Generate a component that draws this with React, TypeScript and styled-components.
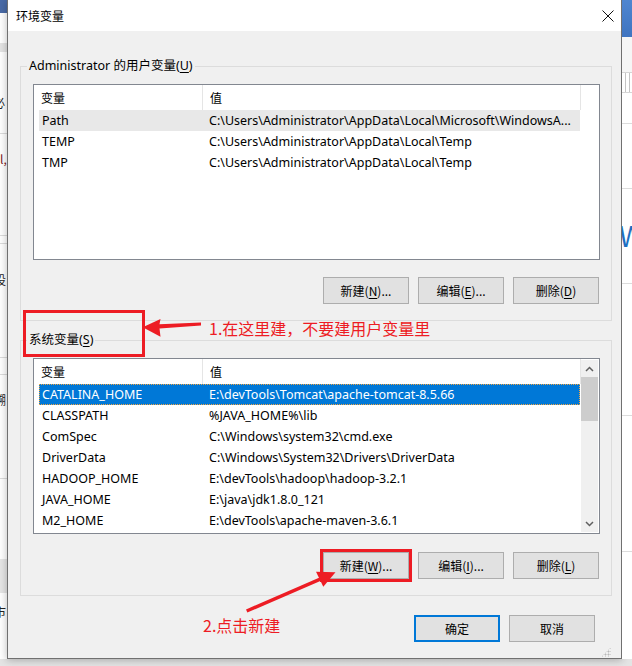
import React from "react";
import styled, { createGlobalStyle, css } from "styled-components";

const UI_FONT = `"Noto Sans", "Noto Sans CJK SC", sans-serif`;
const CJK_FONT = `"Noto Sans CJK SC", "Noto Sans", sans-serif`;
const RED = "#ed1c24";

const GlobalStyle = createGlobalStyle`
  html, body { margin: 0; padding: 0; }
  body {
    width: 632px;
    height: 666px;
    overflow: hidden;
    background: #e8e8e8;
    font-family: ${UI_FONT};
    font-size: 12px;
    color: #000;
  }
  u { text-decoration-thickness: 1px; text-underline-offset: 2px; }
`;

const Screen = styled.div`
  position: relative;
  width: 632px;
  height: 666px;
  overflow: hidden;
  display: flex;
  align-items: flex-start;
  background: linear-gradient(#f0f0f0, #e4e4e4);
`;

/* ---------- background application (visible at the edges) ---------- */
const SideStrip = styled.div<{ $w: number }>`
  flex: none;
  width: ${(p) => p.$w}px;
  height: 659px;
  display: flex;
  flex-direction: column;
  background: #ffffff;
  overflow: hidden;
`;

const Band = styled.div<{ $h?: number; $bg?: string; $line?: boolean; $grow?: boolean }>`
  flex: ${(p) => (p.$grow ? "1" : "none")};
  height: ${(p) => (p.$h ? `${p.$h}px` : "auto")};
  box-sizing: border-box;
  background: ${(p) => p.$bg ?? "transparent"};
  ${(p) =>
    p.$line &&
    css`
      border-bottom: 1px solid #dcdcdc;
    `}
`;

const ToolBand = styled.div`
  flex: none;
  height: 21px;
  box-sizing: border-box;
  border-top: 1px solid #d6d6d6;
  border-bottom: 1px solid #d6d6d6;
  display: flex;
  gap: 3px;
  padding-left: 3px;
  & > span {
    width: 1px;
    background: #c4c4c4;
  }
`;

const Shard = styled.div<{ $shift: number; $color?: string; $size?: number }>`
  flex: none;
  height: ${(p) => (p.$size ? p.$size + 4 : 16)}px;
  line-height: ${(p) => (p.$size ? p.$size + 4 : 16)}px;
  font-family: ${CJK_FONT};
  font-size: ${(p) => p.$size ?? 12}px;
  color: ${(p) => p.$color ?? "#222"};
  margin-left: ${(p) => p.$shift}px;
  white-space: nowrap;
`;

/* ---------- dialog ---------- */
const Dialog = styled.section`
  flex: none;
  width: 615px;
  height: 659px;
  box-sizing: border-box;
  border: 1px solid #707070;
  border-top: none;
  background: #f0f0f0;
  display: flex;
  flex-direction: column;
  box-shadow: 0 1px 8px rgba(0, 0, 0, 0.28);
`;

const TitleBar = styled.header`
  flex: none;
  height: 31px;
  background: #ffffff;
  display: flex;
  align-items: center;
  justify-content: space-between;
  padding: 0 7px 0 8px;
`;

const Title = styled.span`
  font-family: ${CJK_FONT};
  font-size: 12px;
  line-height: 16px;
`;

const Body = styled.div`
  flex: 1;
  display: flex;
  flex-direction: column;
  padding: 27px 9px 0 12px;
`;

const Group = styled.fieldset<{ $gap?: number }>`
  margin: ${(p) => p.$gap ?? 0}px 0 0 0;
  padding: 10px 11px 16px 12px;
  border: 1px solid #dcdcdc;
  min-width: 0;
`;

const GroupLegend = styled.legend`
  margin-left: -6px;
  padding: 0 2px;
  font-size: 12.5px;
  line-height: 16px;
  white-space: nowrap;
`;

const ListBox = styled.div`
  height: 176px;
  box-sizing: border-box;
  border: 1px solid #828790;
  background: #ffffff;
  display: flex;
`;

const ListMain = styled.div`
  flex: 1;
  min-width: 0;
  display: flex;
  flex-direction: column;
  overflow: hidden;
`;

const HeaderRow = styled.div`
  flex: none;
  height: 25px;
  display: flex;
`;

const HeaderCell = styled.div<{ $w: number }>`
  flex: none;
  width: ${(p) => p.$w}px;
  box-sizing: border-box;
  border-right: 1px solid #e5e5e5;
  padding-left: 7px;
  line-height: 25px;
  font-family: ${CJK_FONT};
  font-size: 12px;
`;

const ItemRow = styled.div<{ $state?: "selected" | "hover" }>`
  flex: none;
  display: flex;
  height: 21px;
  width: 541px;
  margin-left: 5px;
  box-sizing: border-box;
  line-height: 21px;
  font-size: 12.5px;
  color: #000;
  ${(p) =>
    p.$state === "hover" &&
    css`
      background: #e8e8e8;
    `}
  ${(p) =>
    p.$state === "selected" &&
    css`
      background: #0078d7;
      color: #ffffff;
      outline: 1px dotted #f2a541;
      outline-offset: -1px;
    `}
`;

const ItemCell = styled.div<{ $w: number; $pad: number }>`
  flex: none;
  width: ${(p) => p.$w}px;
  box-sizing: border-box;
  padding-left: ${(p) => p.$pad}px;
  white-space: nowrap;
  overflow: hidden;
`;

const ScrollBar = styled.div`
  flex: none;
  width: 17px;
  margin: 1px 1px 1px 0;
  background: #f0f0f0;
  display: flex;
  flex-direction: column;
`;

const ScrollArrow = styled.div`
  flex: none;
  height: 17px;
  display: flex;
  align-items: center;
  justify-content: center;
`;

const ScrollTrack = styled.div`
  flex: 1;
`;

const ScrollThumb = styled.div`
  height: 44px;
  background: #cdcdcd;
`;

const ButtonRow = styled.div<{ $top: number; $right: number }>`
  display: flex;
  justify-content: flex-end;
  gap: 9px;
  margin-top: ${(p) => p.$top}px;
  padding-right: ${(p) => p.$right}px;
`;

const Button = styled.div<{ $primary?: boolean; $marked?: boolean }>`
  flex: none;
  width: 86px;
  height: 27px;
  box-sizing: border-box;
  border: 1px solid #adadad;
  background: #e1e1e1;
  display: flex;
  align-items: center;
  justify-content: center;
  font-family: ${CJK_FONT};
  font-size: 12px;
  white-space: nowrap;
  ${(p) =>
    p.$primary &&
    css`
      border: 2px solid #0078d7;
    `}
  ${(p) =>
    p.$marked &&
    css`
      outline: 3px solid ${RED};
      outline-offset: 0;
    `}
`;

const Grip = styled.div`
  align-self: flex-end;
  margin: auto 1px 1px 0;
  width: 10px;
  height: 10px;
  background-image: radial-gradient(circle, #b8b8b8 0.9px, transparent 1.1px);
  background-size: 3px 3px;
  clip-path: polygon(100% 0, 100% 100%, 0 100%);
`;

/* ---------- annotations ---------- */
const MarkBox = styled.div`
  position: absolute;
  left: 23px;
  top: 310px;
  width: 122px;
  height: 47px;
  box-sizing: border-box;
  border: 3px solid ${RED};
  pointer-events: none;
`;

const Note = styled.div<{ $x: number; $y: number }>`
  position: absolute;
  left: ${(p) => p.$x}px;
  top: ${(p) => p.$y}px;
  font-family: ${CJK_FONT};
  font-size: 16px;
  line-height: 22px;
  color: ${RED};
  white-space: nowrap;
`;

const ArrowSvg = styled.svg<{ $x: number; $y: number }>`
  position: absolute;
  left: ${(p) => p.$x}px;
  top: ${(p) => p.$y}px;
  overflow: visible;
  pointer-events: none;
`;

/* ---------- data ---------- */
type Row = { name: string; value: string; state?: "selected" | "hover" };

const userVars: Row[] = [
  { name: "Path", value: "C:\\Users\\Administrator\\AppData\\Local\\Microsoft\\WindowsA...", state: "hover" },
  { name: "TEMP", value: "C:\\Users\\Administrator\\AppData\\Local\\Temp" },
  { name: "TMP", value: "C:\\Users\\Administrator\\AppData\\Local\\Temp" },
];

const sysVars: Row[] = [
  { name: "CATALINA_HOME", value: "E:\\devTools\\Tomcat\\apache-tomcat-8.5.66", state: "selected" },
  { name: "CLASSPATH", value: "%JAVA_HOME%\\lib" },
  { name: "ComSpec", value: "C:\\Windows\\system32\\cmd.exe" },
  { name: "DriverData", value: "C:\\Windows\\System32\\Drivers\\DriverData" },
  { name: "HADOOP_HOME", value: "E:\\devTools\\hadoop\\hadoop-3.2.1" },
  { name: "JAVA_HOME", value: "E:\\java\\jdk1.8.0_121" },
  { name: "M2_HOME", value: "E:\\devTools\\apache-maven-3.6.1" },
];

const Chevron = ({ up }: { up?: boolean }) => (
  <svg width="9" height="6" viewBox="0 0 9 6">
    <path
      d={up ? "M1 5L4.5 1.5L8 5" : "M1 1L4.5 4.5L8 1"}
      fill="none"
      stroke="#606060"
      strokeWidth="1.5"
    />
  </svg>
);

const CloseIcon = () => (
  <svg width="12" height="12" viewBox="0 0 12 12">
    <path d="M0.5 0.5L11.5 11.5M11.5 0.5L0.5 11.5" stroke="#111" strokeWidth="1" />
  </svg>
);

function VarList({ rows, scroll }: { rows: Row[]; scroll?: boolean }) {
  return (
    <ListBox>
      <ListMain>
        <HeaderRow>
          <HeaderCell $w={169}>变量</HeaderCell>
          <HeaderCell $w={378}>值</HeaderCell>
        </HeaderRow>
        {rows.map((r) => (
          <ItemRow key={r.name} $state={r.state}>
            <ItemCell $w={163} $pad={3}>
              {r.name}
            </ItemCell>
            <ItemCell $w={378} $pad={7}>
              {r.value}
            </ItemCell>
          </ItemRow>
        ))}
      </ListMain>
      {scroll && (
        <ScrollBar>
          <ScrollArrow>
            <Chevron up />
          </ScrollArrow>
          <ScrollTrack>
            <ScrollThumb />
          </ScrollTrack>
          <ScrollArrow>
            <Chevron />
          </ScrollArrow>
        </ScrollBar>
      )}
    </ListBox>
  );
}

export default function App() {
  return (
    <>
      <GlobalStyle />
      <Screen>
        <SideStrip $w={7}>
          <Band $h={13} $bg="#4a6ba7" />
          <Band $h={30} />
          <Band $h={9} $bg="#e4e4e4" />
          <Band $h={43} />
          <Shard $shift={-7}>必</Shard>
          <Band $h={23} $line />
          <Band $h={17} />
          <Shard $shift={0} $color="#7a2020">l,</Shard>
          <Band $h={69} $line />
          <Band $h={8} $line />
          <Band $h={28} />
          <Shard $shift={-6}>设</Shard>
          <Band $h={70} $line />
          <Band $h={17} $line />
          <Band $h={17} />
          <Shard $shift={-6}>嗍</Shard>
          <Band $h={71} $line />
          <Band $h={80} />
          <Band $h={34} $bg="#e6e6e6" />
          <Band $h={11} />
          <Shard $shift={-6}>市</Shard>
          <Band $grow />
        </SideStrip>

        <Dialog>
          <TitleBar>
            <Title>环境变量</Title>
            <CloseIcon />
          </TitleBar>
          <Body>
            <Group>
              <GroupLegend>
                Administrator 的用户变量(<u>U</u>)
              </GroupLegend>
              <VarList rows={userVars} />
              <ButtonRow $top={17} $right={1}>
                <Button>
                  新建(<u>N</u>)...
                </Button>
                <Button>
                  编辑(<u>E</u>)...
                </Button>
                <Button>
                  删除(<u>D</u>)
                </Button>
              </ButtonRow>
            </Group>

            <Group $gap={11}>
              <GroupLegend>
                系统变量(<u>S</u>)
              </GroupLegend>
              <VarList rows={sysVars} scroll />
              <ButtonRow $top={18} $right={1}>
                <Button $marked>
                  新建(<u>W</u>)...
                </Button>
                <Button>
                  编辑(<u>I</u>)...
                </Button>
                <Button>
                  删除(<u>L</u>)
                </Button>
              </ButtonRow>
            </Group>

            <ButtonRow $top={19} $right={17}>
              <Button $primary>确定</Button>
              <Button>取消</Button>
            </ButtonRow>
            <Grip />
          </Body>
        </Dialog>

        <SideStrip $w={10}>
          <Band $h={37} $bg="linear-gradient(#4f86d0, #3f74c0)" />
          <Band $h={35} $bg="#f6f6f6" />
          <ToolBand>
            <span />
            <span />
          </ToolBand>
          <Band $h={31} $line />
          <Band $h={65} $line />
          <Band $h={30} />
          <Shard $shift={-3} $color="#1e6fc1" $size={28}>
            W
          </Shard>
          <Band $h={33} $line />
          <Band $h={132} $line />
          <Band $h={136} $line />
          <Band $grow />
        </SideStrip>

        <MarkBox />
        <ArrowSvg $x={140} $y={315} width="64" height="24" viewBox="0 0 64 24">
          <polygon
            points="2.7,12.3 20.5,4 19.5,9.3 61,7.4 61,10.4 19.5,13.4 20.5,21.7"
            fill={RED}
          />
        </ArrowSvg>
        <Note $x={209} $y={317}>1.在这里建，不要建用户变量里</Note>

        <ArrowSvg $x={242} $y={566} width="98" height="50" viewBox="0 0 98 50">
          <line x1="4.7" y1="45" x2="80" y2="12.4" stroke={RED} strokeWidth="3.4" />
          <polygon points="93.5,6.3 74,5.7 81.3,20.7" fill={RED} />
        </ArrowSvg>
        <Note $x={203} $y={614}>2.点击新建</Note>
      </Screen>
    </>
  );
}
